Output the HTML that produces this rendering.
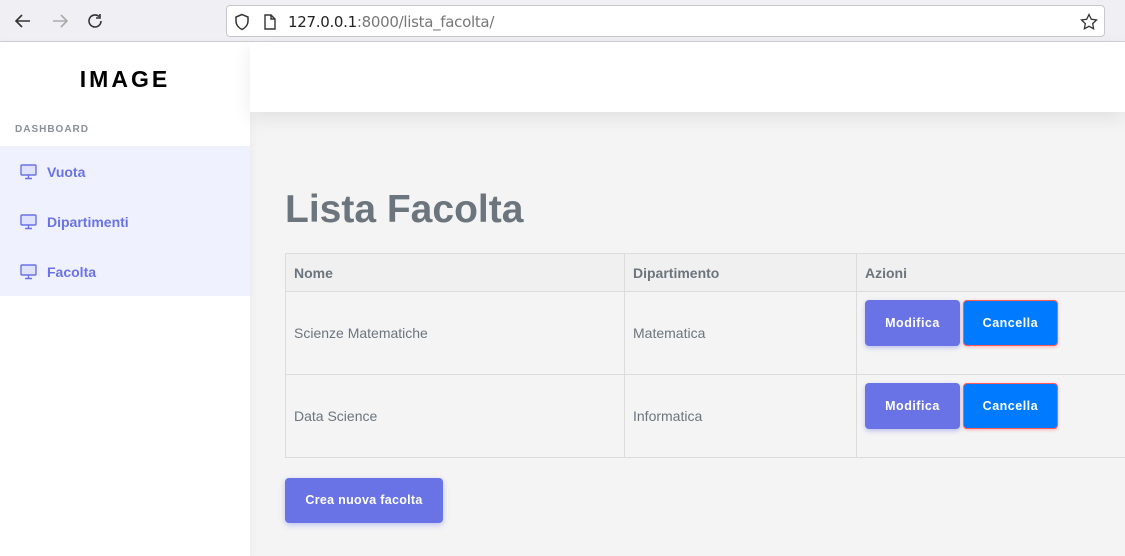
<!DOCTYPE html><html><head><style>
*{margin:0;padding:0;box-sizing:border-box}
body{width:1125px;height:556px;overflow:hidden;font-family:"Liberation Sans",sans-serif;background:#f4f4f4;position:relative}
.chrome{position:absolute;left:0;top:0;width:1125px;height:42px;background:#f0f0f4;border-bottom:1px solid #cfcfd4}
.url{position:absolute;left:226px;top:5px;width:879px;height:32px;background:#fff;border:1px solid #c8c8cc;border-radius:4px}
.url span{position:absolute;left:61px;top:7px;font-size:15px;color:#222;font-family:"DejaVu Sans",sans-serif;letter-spacing:-0.3px}
.side{position:absolute;left:0;top:42px;width:250px;height:514px;background:#fff;box-shadow:2px 0 8px rgba(0,0,0,.04)}
.logo{position:absolute;left:0;width:250px;top:24px;text-align:center;font-weight:bold;font-size:23px;letter-spacing:3px;color:#000}
.dash{position:absolute;left:15px;top:82px;font-size:10px;font-weight:bold;letter-spacing:1px;color:#8a8f98}
.menu{position:absolute;left:0;top:104px;width:250px;height:150px;background:#eff1fe}
.item{position:absolute;left:20px;font-size:14px;font-weight:bold;color:#6973e6;display:flex;align-items:center}
.item svg{margin-right:10px}
.head{position:absolute;left:250px;top:42px;width:875px;height:70px;background:#fff;box-shadow:0 6px 18px rgba(0,0,0,.08)}
h1{position:absolute;left:285px;top:188px;font-size:39px;color:#6c757d;font-weight:bold}
table{position:absolute;left:285px;top:253px;border-collapse:collapse;width:860px;font-size:14px;color:#6c757d}
td,th{border:1px solid #dcdcdc;text-align:left;padding:0 8px}
th{height:38px;background:#f0f0f0;font-weight:bold}
td{height:83px;vertical-align:middle}
td.a{vertical-align:top;padding-top:8px}
.btn{display:inline-block;width:95px;height:46px;border-radius:4px;color:#fff;font-weight:bold;font-size:12.5px;text-align:center;line-height:46px;letter-spacing:.5px;vertical-align:top}
.m{background:#6973e6;box-shadow:0 2px 5px rgba(105,115,230,.4)}
.c{background:#007bff;border:1px solid #ff5a5a;line-height:44px;margin-left:-1px;box-shadow:0 1px 3px rgba(255,80,80,.4)}
.new{position:absolute;left:285px;top:478px;width:158px;height:45px;border-radius:4px;background:#6973e6;color:#fff;font-weight:bold;font-size:12.5px;text-align:center;line-height:45px;letter-spacing:.3px;box-shadow:0 2px 6px rgba(105,115,230,.4)}
</style></head><body>
<div class="chrome">
<svg style="position:absolute;left:14px;top:12px" width="18" height="18" viewBox="0 0 18 18"><path d="M16 9H3M8 3L2 9l6 6" stroke="#333" stroke-width="1.6" fill="none"/></svg>
<svg style="position:absolute;left:51px;top:12px" width="18" height="18" viewBox="0 0 18 18"><path d="M2 9h13M10 3l6 6-6 6" stroke="#aaa" stroke-width="1.6" fill="none"/></svg>
<svg style="position:absolute;left:86px;top:12px" width="18" height="18" viewBox="0 0 18 18"><path d="M15 9a6 6 0 1 1-2-4.5M14 2v4h-4" stroke="#333" stroke-width="1.6" fill="none"/></svg>
<div class="url">
<svg style="position:absolute;left:7px;top:7px" width="16" height="18" viewBox="0 0 16 18"><path d="M8 1.5L2 4v4c0 4 3 7 6 8.5 3-1.5 6-4.5 6-8.5V4z" stroke="#333" stroke-width="1.5" fill="none"/></svg>
<svg style="position:absolute;left:36px;top:8px" width="14" height="16" viewBox="0 0 14 16"><path d="M2 1h6l4 4v10H2zM8 1v4h4" stroke="#333" stroke-width="1.4" fill="none"/></svg>
<span>127.0.0.1<span style="position:static;color:#777">:8000/lista_facolta/</span></span>
<svg style="position:absolute;right:6px;top:7px" width="18" height="18" viewBox="0 0 18 18"><path d="M9 1.5l2.3 4.8 5.2.7-3.8 3.6.9 5.2L9 13.3l-4.6 2.5.9-5.2L1.5 7l5.2-.7z" stroke="#333" stroke-width="1.3" fill="none"/></svg>
</div></div>
<div class="side">
<div class="logo">IMAGE</div>
<div class="dash">DASHBOARD</div>
<div class="menu"></div>
<div class="item" style="top:122px"><svg width="17" height="16" viewBox="0 0 17 16"><rect x="1" y="1" width="15" height="10" rx="1" fill="#dfe2fb" stroke="#6973e6" stroke-width="1.4"/><path d="M8.5 11v3M5 14.5h7" stroke="#6973e6" stroke-width="1.4"/></svg>Vuota</div>
<div class="item" style="top:172px"><svg width="17" height="16" viewBox="0 0 17 16"><rect x="1" y="1" width="15" height="10" rx="1" fill="#dfe2fb" stroke="#6973e6" stroke-width="1.4"/><path d="M8.5 11v3M5 14.5h7" stroke="#6973e6" stroke-width="1.4"/></svg>Dipartimenti</div>
<div class="item" style="top:222px"><svg width="17" height="16" viewBox="0 0 17 16"><rect x="1" y="1" width="15" height="10" rx="1" fill="#dfe2fb" stroke="#6973e6" stroke-width="1.4"/><path d="M8.5 11v3M5 14.5h7" stroke="#6973e6" stroke-width="1.4"/></svg>Facolta</div>
</div>
<div class="head"></div>
<h1>Lista Facolta</h1>
<table>
<tr><th style="width:339px">Nome</th><th style="width:232px">Dipartimento</th><th>Azioni</th></tr>
<tr><td>Scienze Matematiche</td><td>Matematica</td><td class="a"><span class="btn m">Modifica</span> <span class="btn c">Cancella</span></td></tr>
<tr><td>Data Science</td><td>Informatica</td><td class="a"><span class="btn m">Modifica</span> <span class="btn c">Cancella</span></td></tr>
</table>
<div class="new">Crea nuova facolta</div>
</body></html>
